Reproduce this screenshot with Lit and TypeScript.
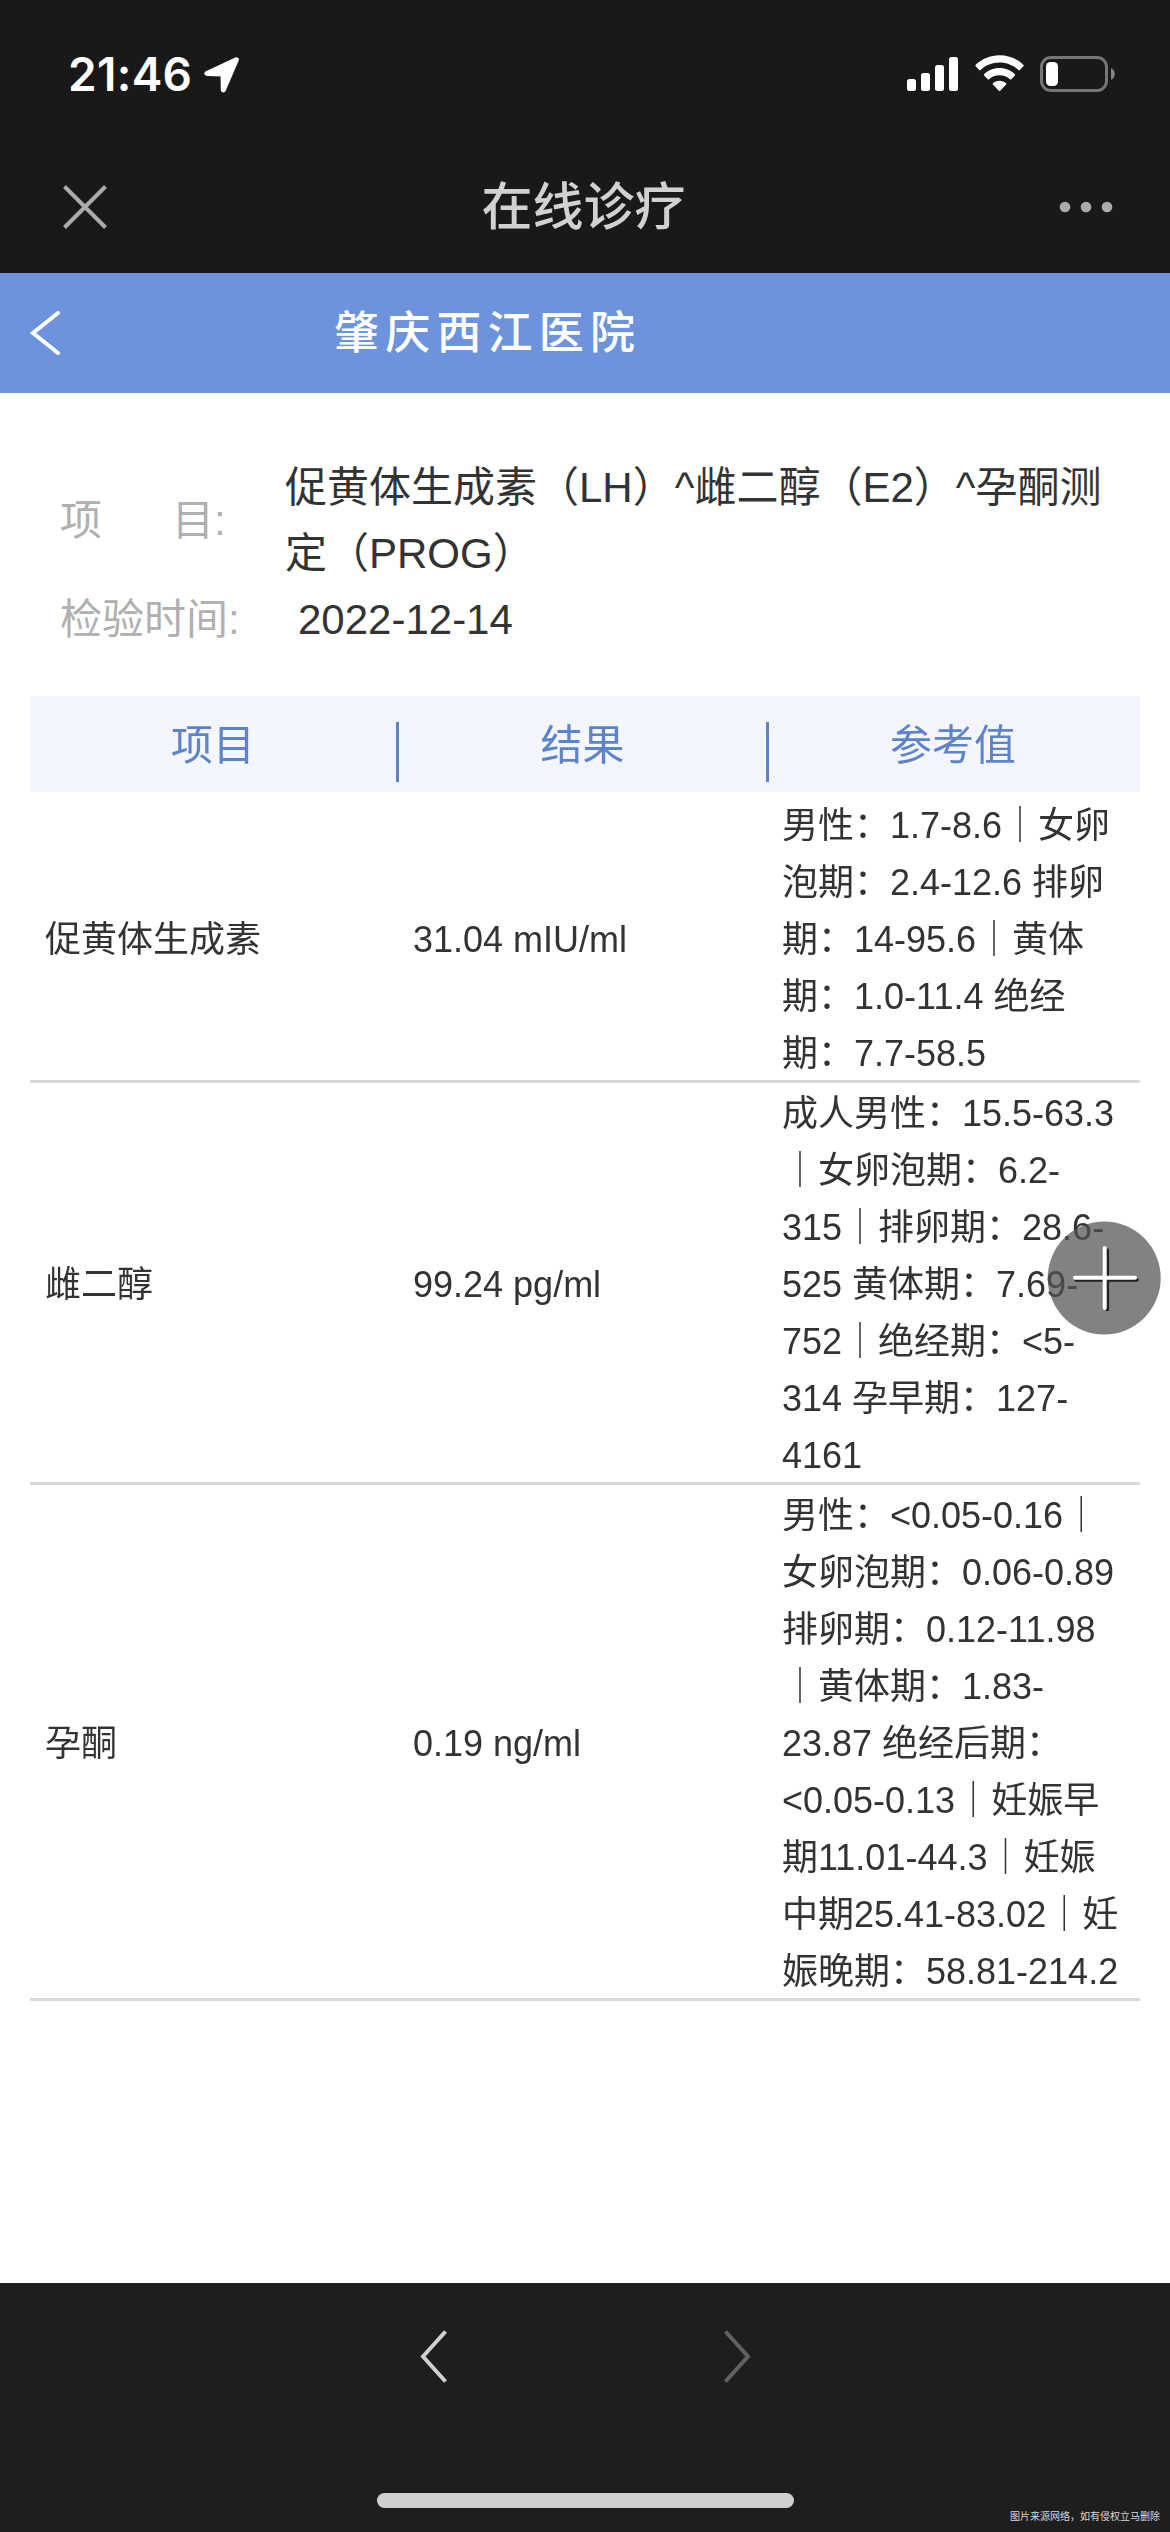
import { LitElement, html, css, svg } from "lit";
import { customElement } from "lit/decorators.js";

interface ResultRow {
  name: string;
  value: string;
  reference: string[];
}

const ROWS: ResultRow[] = [
  {
    name: "促黄体生成素",
    value: "31.04 mIU/ml",
    reference: ["男性：1.7-8.6｜女卵", "泡期：2.4-12.6 排卵", "期：14-95.6｜黄体", "期：1.0-11.4 绝经", "期：7.7-58.5"],
  },
  {
    name: "雌二醇",
    value: "99.24 pg/ml",
    reference: [
      "成人男性：15.5-63.3",
      "｜女卵泡期：6.2-",
      "315｜排卵期：28.6-",
      "525 黄体期：7.69-",
      "752｜绝经期：<5-",
      "314 孕早期：127-",
      "4161",
    ],
  },
  {
    name: "孕酮",
    value: "0.19 ng/ml",
    reference: [
      "男性：<0.05-0.16｜",
      "女卵泡期：0.06-0.89",
      "排卵期：0.12-11.98",
      "｜黄体期：1.83-",
      "23.87 绝经后期：",
      "<0.05-0.13｜妊娠早",
      "期11.01-44.3｜妊娠",
      "中期25.41-83.02｜妊",
      "娠晚期：58.81-214.2",
    ],
  },
];

const SIGNAL_TOPS = [24, 18, 10, 2];

@customElement("status-bar")
class StatusBar extends LitElement {
  static styles = css`
    :host {
      display: flex;
      align-items: center;
      height: 148px;
      padding: 0 54px 0 68px;
      box-sizing: border-box;
      color: #fff;
    }
    .time {
      font: 600 46px/56px Inter, "Liberation Sans", sans-serif;
      letter-spacing: 0.3px;
      width: 136px;
      white-space: nowrap;
    }
    .icons {
      display: flex;
      margin-left: auto;
    }
    svg {
      display: block;
    }
    .wifi {
      margin: 0 16px 0 16px;
    }
  `;
  render() {
    return html`
      <span class="time">21:46</span>
      <svg width="38" height="38" viewBox="0 0 38 38">
        <path d="M32.300 4.700 3 18.500 19 18.900 19.300 35z" fill="#fff" stroke="#fff" stroke-width="5" stroke-linejoin="round" />
      </svg>
      <div class="icons">
        <svg width="52" height="38" viewBox="0 0 52 38">
          ${SIGNAL_TOPS.map((t, i) => svg`<rect x=${i * 14} y=${t} width="9" height=${36 - t} rx="2.500" fill="#fff" />`)}
        </svg>
        <svg class="wifi" width="49" height="38" viewBox="0 0 49 38">
          <path d="M24.500 0.200C34 .2 42.500 4 48.300 9.800c.5.500.5 1 0 1.500l-3.500 3.700c-.4.400-1 .4-1.400 0C38.500 10.300 31.900 7.500 24.500 7.500S10.500 10.300 5.600 15c-.4.400-1 .4-1.400 0L.7 11.300c-.5-.5-.5-1 0-1.500C6.500 4 15 .2 24.500.2z" fill="#fff" />
          <path d="M24.500 13c6.200 0 11.600 2.400 15.400 6.200.4.400.4 1 0 1.400l-3.600 3.600c-.4.400-1 .4-1.400 0-2.700-2.500-6.300-4-10.400-4s-7.700 1.500-10.400 4c-.4.400-1 .4-1.400 0l-3.600-3.600c-.4-.4-.4-1 0-1.400 3.800-3.800 9.200-6.200 15.400-6.200z" fill="#fff" />
          <path d="M24.500 25.700c2.600 0 4.900 1 6.600 2.600.4.400.4.900 0 1.300l-5.900 6.200c-.4.400-1 .4-1.400 0l-5.900-6.200c-.4-.4-.4-.9 0-1.300 1.700-1.600 4-2.600 6.600-2.600z" fill="#fff" />
        </svg>
        <svg width="76" height="38" viewBox="0 0 76 38">
          <rect x="1.500" y="2.500" width="65" height="33" rx="9.500" fill="none" stroke="#767676" stroke-width="3" />
          <rect x="6" y="7" width="12" height="24" rx="4.500" fill="#fff" />
          <path d="M71 13c5 2.500 5 9.500 0 12z" fill="#868686" />
        </svg>
      </div>
    `;
  }
}

@customElement("app-root")
class AppRoot extends LitElement {
  static styles = css`
    :host {
      display: flex;
      flex-direction: column;
      width: 1170px;
      height: 2532px;
      overflow: hidden;
      position: relative;
      background: #fff;
      color: #333;
      font-family: "Liberation Sans", "Noto Sans CJK SC", sans-serif;
    }
    svg {
      display: block;
    }
    .chrome {
      background: #191919;
      height: 273px;
      flex: none;
    }
    .nav {
      display: flex;
      align-items: center;
      justify-content: space-between;
      height: 117px;
      padding: 0 57px 0 62px;
    }
    .nav-title {
      padding-top: 3px;
      font-size: 51px;
      font-weight: 500;
      line-height: 60px;
      color: #d1d1d1;
    }
    .hospital {
      display: flex;
      align-items: center;
      flex: none;
      height: 120px;
      padding-left: 28px;
      background: #6c93dc;
      color: #fff;
    }
    .hospital-name {
      margin-left: 272px;
      padding-top: 2px;
      font-size: 45px;
      font-weight: 500;
      line-height: 60px;
      letter-spacing: 6.200px;
    }
    .info {
      display: grid;
      grid-template-columns: 225px 1fr;
      align-items: center;
      padding: 62px 30px 43px 60px;
      font-size: 42px;
      line-height: 66px;
    }
    .label {
      color: #b0b0b0;
      white-space: nowrap;
    }
    .spread {
      display: inline-flex;
      justify-content: space-between;
      width: 154px;
    }
    .value {
      white-space: pre;
    }
    .date {
      padding-left: 13px;
    }
    .table {
      margin: 0 30px;
      will-change: transform;
    }
    .head {
      display: grid;
      grid-template-columns: 369px 370px 371px;
      height: 96px;
      margin-bottom: 3px;
      background: #f3f6ff;
      color: #5f83c9;
      font-size: 42px;
      line-height: 92px;
    }
    .head-cell {
      display: flex;
      justify-content: center;
    }
    .head-cell::after {
      content: "";
      width: 3px;
      height: 60px;
      margin: 26px 0 0;
      background: #5f83c9;
    }
    .head-text {
      flex: 1;
      padding-top: 4px;
      text-align: center;
    }
    .head-cell:last-child::after {
      background: none;
    }
    .row {
      display: grid;
      grid-template-columns: 368px 369px 1fr;
      align-items: center;
      padding: 2px 0 0 15px;
      border-bottom: 3px solid #d8d8db;
      font-size: 36px;
      line-height: 57px;
    }
    .cell {
      padding-top: 2px;
    }
    .lines {
      margin-bottom: -2px;
    }
    .line {
      height: 57px;
      white-space: pre;
    }
    .footer {
      display: flex;
      flex-direction: column;
      align-items: center;
      height: 249px;
      margin-top: auto;
      background: #1e1e1e;
      flex: none;
    }
    .pager {
      display: flex;
      gap: 273px;
      margin-top: 46px;
    }
    .home {
      flex: none;
      width: 417px;
      height: 15px;
      margin-top: 110px;
      border-radius: 8px;
      background: #d0d0d0;
    }
    .notice {
      align-self: flex-end;
      margin: 2px 10px 0 0;
      font-size: 10px;
      line-height: 14px;
      color: #d8d8d8;
    }
    .fab {
      position: absolute;
      left: 1047px;
      top: 1221px;
    }
  `;

  render() {
    return html`
      <div class="chrome">
        <status-bar></status-bar>
        <div class="nav">
          <svg width="46" height="46" viewBox="0 0 46 46">
            <path d="M2.500 2.500 43.500 43.500M43.500 2.500 2.500 43.500" stroke="#ababab" stroke-width="4" />
          </svg>
          <span class="nav-title">在线诊疗</span>
          <svg width="54" height="12" viewBox="0 0 54 12">
            ${[6, 27, 48].map((x) => svg`<circle cx=${x} cy="6" r="5.300" fill="#ababab" />`)}
          </svg>
        </div>
      </div>
      <div class="hospital">
        <svg width="34" height="48" viewBox="0 0 34 48">
          <path d="M30 4 5 24 30 44" fill="none" stroke="#fff" stroke-width="4" stroke-linecap="round" />
        </svg>
        <span class="hospital-name">肇庆西江医院</span>
      </div>
      <div class="info">
        <span class="label"><span class="spread"><span>项</span><span>目</span></span>:</span>
        <span class="value">促黄体生成素（LH）^雌二醇（E2）^孕酮测<br />定（PROG）</span>
        <span class="label">检验时间:</span>
        <span class="value date">2022-12-14</span>
      </div>
      <div class="table">
        <div class="head">
          ${["项目", "结果", "参考值"].map((t) => html`<div class="head-cell"><span class="head-text">${t}</span></div>`)}
        </div>
        ${ROWS.map(
          (r) => html`<div class="row">
            <span class="cell">${r.name}</span>
            <span class="cell">${r.value}</span>
            <div class="lines">${r.reference.map((l) => html`<div class="line">${l}</div>`)}</div>
          </div>`,
        )}
      </div>
      <div class="footer">
        <div class="pager">
          <svg width="30" height="54" viewBox="0 0 30 54">
            <path d="M26.500 2.500 4 27.500 26.500 52.500" fill="none" stroke="#d0d0d0" stroke-width="4" />
          </svg>
          <svg width="30" height="54" viewBox="0 0 30 54">
            <path d="M3.500 2.500 26 27.500 3.500 52.500" fill="none" stroke="#626262" stroke-width="4" />
          </svg>
        </div>
        <div class="home"></div>
        <div class="notice">图片来源网络，如有侵权立马删除</div>
      </div>
      <svg class="fab" width="114" height="114" viewBox="0 0 114 114">
        <circle cx="57.200" cy="57" r="56.500" fill="#525252" fill-opacity="0.720" />
        <path d="M60.300 29V88.500M29 59H90" stroke="#222" stroke-width="3.500" stroke-linecap="round" />
        <path d="M57.700 27V87M28 56.700H88" stroke="#fff" stroke-width="4" stroke-linecap="round" />
      </svg>
    `;
  }
}
